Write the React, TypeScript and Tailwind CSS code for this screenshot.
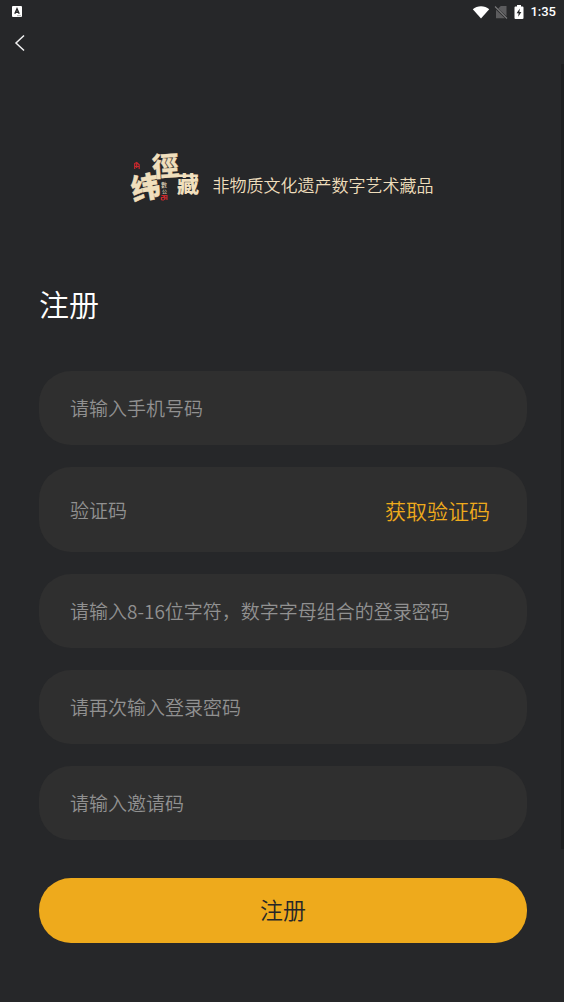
import { useState } from 'react';

const fields = [
  { id: 'phone', type: 'tel', placeholder: '请输入手机号码' },
  { id: 'code', type: 'text', placeholder: '验证码', action: '获取验证码' },
  { id: 'password', type: 'password', placeholder: '请输入8-16位字符，数字字母组合的登录密码' },
  { id: 'confirm', type: 'password', placeholder: '请再次输入登录密码' },
  { id: 'invite', type: 'text', placeholder: '请输入邀请码' }
];

function StatusBar() {
  return (
    <div className="flex h-[23px] items-center justify-between pl-3 pr-2">
      <svg viewBox="0 0 10 12" className="h-3 w-[10px]" fill="none">
        <rect width="10" height="11" rx="1" fill="#fff" />
        <path d="M2.8 7.8 5 2.8l2.2 5M3.6 6.3h2.8" stroke="#262729" strokeWidth="1.4" />
        <path d="M5.5 9.7h1M7.5 9.7h1" stroke="#262729" strokeWidth="0.8" />
      </svg>
      <div className="flex items-center">
        <svg viewBox="0 0 18 14" className="h-[14px] w-[18px]">
          <path d="M.8 4.2C5 .2 13 .2 17.200 4.200L9 13.500z" fill="#fff" />
        </svg>
        <svg viewBox="0 0 14 14" className="ml-1 h-[14px] w-[14px]">
          <path d="M12.5 1v10.2L4.2 3.4 6.8 1zM2 4.8 11 13.2H2z" fill="#5c5c5e" />
          <path d="m1 1.500 12 12" stroke="#7a7a7c" strokeWidth="1.1" />
        </svg>
        <svg viewBox="0 0 10 14" className="ml-[6px] h-[14px] w-[10px]">
          <path d="M3 0h4v1.5h1.6c.5 0 .9.4.9.9v10.7c0 .5-.4.9-.9.9H1.4c-.5 0-.9-.4-.9-.9V2.4c0-.5.4-.9.9-.9H3z" fill="#fff" />
          <path d="M5.8 3.6 2.6 8.3h2L4.2 11.8l3.2-4.7h-2z" fill="#262729" />
        </svg>
        <span className="ml-[6px] font-[Roboto,sans-serif] text-[13px] font-medium leading-[23px] text-white">1:35</span>
      </div>
    </div>
  );
}

function Logo() {
  return (
    <svg viewBox="0 0 68 56" className="h-14 w-[68px] shrink-0 overflow-visible" role="img" aria-label="經緯藏">
      <g fill="#f0dfbd" stroke="#f0dfbd" strokeLinejoin="round" className="font-black">
        <text x="19" y="26" fontSize="27" strokeWidth="0.3" transform="rotate(-4 33 15)">徑</text>
        <text x="-2" y="48" fontSize="29" strokeWidth="0.5" transform="rotate(-10 13 36)">纬</text>
        <text x="44" y="42" fontSize="22" strokeWidth="0">藏</text>
      </g>
      <g fill="#d8cbb0" className="font-medium">
        <text x="28" y="37" fontSize="6">數</text>
        <text x="29" y="43" fontSize="5">公</text>
      </g>
      {/* Red seals */}
      <g stroke="#c9282d" strokeWidth="1.2" fill="none">
        <path d="M1.700 19v-5.500l2-1 2.500 2.200V19M1.700 16.500h4.500M3.700 13v5" />
        <path d="M28.500 45.500h2.500v2h-2.500v2.500M31.700 50v-4.500H34V50M28.500 50h2.500M32 47.800h2" />
      </g>
    </svg>
  );
}

export default function App() {
  const [values, setValues] = useState<Record<string, string>>({});

  return (
    <div className="relative min-h-screen bg-[#262729] font-['Noto_Sans_CJK_SC',sans-serif] font-[350]">
      <StatusBar />

      <header className="flex h-10 items-center pl-[14px]">
        <button type="button" aria-label="返回" className="flex">
          <svg viewBox="0 0 12 18" className="h-[18px] w-3" fill="none">
            <path d="M10 1.5 2 9l8 7.5" stroke="#f2f2f2" strokeWidth="1.5" />
          </svg>
        </button>
      </header>

      <main className="pb-14 pl-[39px] pr-[37px]">
        <div className="mt-[87px] flex items-center justify-center">
          <Logo />
          <p className="ml-3 pt-[14px] text-[17px] leading-6 text-[#efdebc]">非物质文化遗产数字艺术藏品</p>
        </div>

        <h1 className="mt-[75px] text-[30px] leading-[44px] text-white">注册</h1>

        <form className="mt-[46px] flex flex-col gap-[22px]" onSubmit={(e) => e.preventDefault()}>
          {fields.map((field) => (
            <div
              key={field.id}
              className={`flex items-center rounded-[32px] bg-[#2f2f2f] pl-[31px] pr-[37px] ${
                field.action ? 'h-[85px]' : 'h-[74px]'
              }`}
            >
              <input
                id={field.id}
                type={field.type}
                aria-label={field.placeholder}
                placeholder={field.placeholder}
                value={values[field.id] || ''}
                onChange={(e) => setValues({ ...values, [field.id]: e.target.value })}
                className="h-7 min-w-0 flex-1 text-[19px] leading-7 text-white outline-none placeholder:text-[#919191]"
              />
              {field.action && (
                <button type="button" className="shrink-0 text-[21px] leading-7 text-[#eeaa1c]">
                  {field.action}
                </button>
              )}
            </div>
          ))}

          <button
            type="submit"
            className="mt-4 h-[65px] rounded-[32px] bg-[#eeaa1c] pb-1 text-[23px] leading-8 text-[#262729]"
          >
            注册
          </button>
        </form>
      </main>

      {/* Scroll indicator */}
      <div className="absolute right-0 top-16 h-[785px] w-[3px] bg-[#1e1f20]" />
    </div>
  );
}
